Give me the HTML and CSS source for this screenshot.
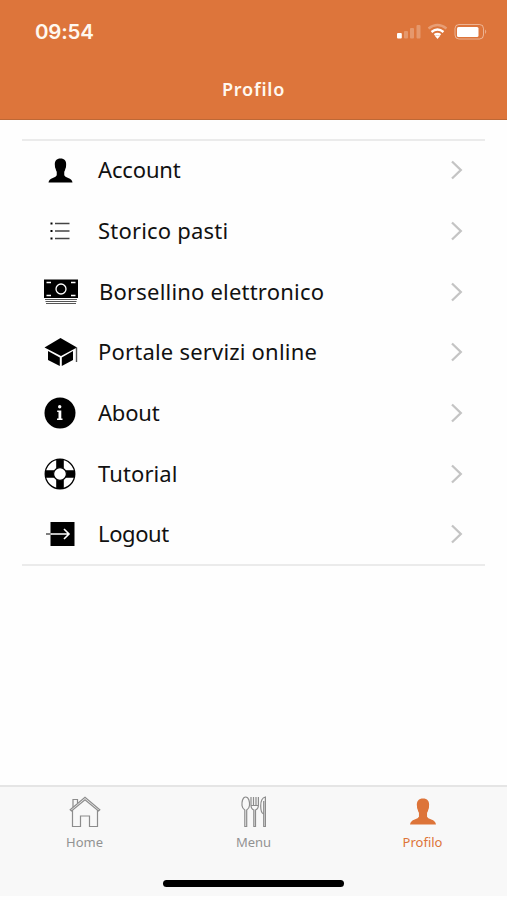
FILE: index.html
```html
<!DOCTYPE html>
<html lang="it">
<head>
<meta charset="utf-8">
<meta name="viewport" content="width=device-width, initial-scale=1">
<title>Profilo</title>
<link rel="stylesheet" href="styles.css">
</head>
<body>
<svg class="symbols" width="0" height="0" aria-hidden="true">
  <symbol id="person" viewBox="0 0 26 26"><path d="M7.200 8C6.500 3 9 .5 13 .5S19.500 3 18.800 8Q19 9.500 18 11.500Q17.500 13.500 16.900 14.300V18Q17.500 19.700 21 20.700Q25 22 25.500 25.500H.5Q1 22 5 20.700Q8.500 19.700 9.100 18V14.300Q8.500 13.500 8 11.500Q7 9.500 7.200 8Z"/></symbol>
  <symbol id="chevron" viewBox="0 0 14 20"><path d="M3 1.500 11.800 10 3 18.500" fill="none" stroke="#c4c4c4" stroke-width="2.300"/></symbol>
</svg>
<main class="screen">
  <header class="header">
    <div class="status">
      <span class="time">09:54</span>
      <svg class="indicators" width="92" height="20" viewBox="0 0 92 20">
        <g fill="#fff"><rect x="0" y="11" width="4.800" height="5.500" rx="1"/><g opacity=".25"><rect x="7" y="9" width="4" height="7.500" rx="1"/><rect x="13" y="6" width="4" height="10.500" rx="1"/><rect x="19.500" y="3" width="4" height="13.500" rx="1"/></g></g>
        <g fill="none" stroke="#fff" stroke-width="2.300"><path d="M31.500 6.500Q40.500 -.5 49.500 6.500" opacity=".3"/><path d="M34.500 10Q40.500 5 46.500 10"/><path d="M37.500 13Q40.500 10.800 43.500 13"/></g>
        <path d="M38 14Q40.500 12.500 43 14L40.500 17Z" fill="#fff"/>
        <rect x="58" y="2.500" width="28.500" height="14.500" rx="4" fill="none" stroke="#fff" opacity=".45"/>
        <rect x="60" y="5" width="21.500" height="10" rx="1.500" fill="#fff"/>
        <path d="M88 7.500Q90.500 9.700 88 12Z" fill="#fff" opacity=".4"/>
      </svg>
    </div>
    <h1 class="title">Profilo</h1>
  </header>
  <nav class="list">
    <a class="row"><svg class="icon person" width="25" height="25"><use href="#person"/></svg><span class="label account">Account</span><svg class="chevron"><use href="#chevron"/></svg></a>
    <a class="row">
      <svg class="icon" width="20" height="18" viewBox="0 0 20 18"><g stroke="#444" stroke-width="1.300"><path d="M5 1.500H19.500M5 9H19.500M5 16.500H19.500"/><path d="M.5 1.500H2.500M.5 9H2.500M.5 16.500H2.500" stroke="#000" stroke-width="2"/></g></svg>
      <span class="label storico">Storico pasti</span><svg class="chevron"><use href="#chevron"/></svg></a>
    <a class="row">
      <svg class="icon wide" width="34" height="26" viewBox="0 0 34 26"><path d="M0 .5H34V19H0Z"/><g fill="none" stroke="#fff" stroke-width="1.300"><circle cx="17" cy="10" r="5"/><path d="M2.500 3.500H7M27 3.500H31.500M2.500 16.500H7M27 16.500H31.500"/></g><path d="M1 20.500H33M1.500 22.500H32.500M2 24.500H32" stroke="#555" stroke-width="1.100"/></svg>
      <span class="label borsellino">Borsellino elettronico</span><svg class="chevron"><use href="#chevron"/></svg></a>
    <a class="row">
      <svg class="icon wide" width="34" height="28" viewBox="0 0 34 28"><path d="M16.500 0 33 9.500 17 18 .5 9.500ZM4 13 15.800 19.500V28L4 22ZM29 13 17.800 19.500V28L29 22Z"/><path d="M32.500 9.500V24" fill="none" stroke="#555" stroke-width="1.400"/></svg>
      <span class="label portale">Portale servizi online</span><svg class="chevron"><use href="#chevron"/></svg></a>
    <a class="row">
      <svg class="icon" width="32" height="32" viewBox="0 0 32 32"><circle cx="16" cy="16" r="15.500"/><g fill="#fff"><circle cx="15.700" cy="9.700" r="1.700"/><path d="M13.200 13.500H17.300V21.500H18.500V23H13V21.500H14.500V15H13.200Z"/></g></svg>
      <span class="label about">About</span><svg class="chevron"><use href="#chevron"/></svg></a>
    <a class="row">
      <svg class="icon" width="32" height="32" viewBox="0 0 32 32"><circle cx="16" cy="16" r="14.800" fill="#fff" stroke="#000" stroke-width="1.300"/><path d="M12.200 1.500Q16 .5 19.800 1.500V30.500Q16 31.500 12.200 30.500ZM1.500 12.200H30.500Q31.500 16 30.500 19.800H1.500Q.5 16 1.500 12.200Z"/><circle cx="16" cy="16" r="6.400" fill="#fff" stroke="#000" stroke-width="1.200"/></svg>
      <span class="label tutorial">Tutorial</span><svg class="chevron"><use href="#chevron"/></svg></a>
    <a class="row">
      <svg class="icon" width="30" height="26" viewBox="0 0 30 26"><path d="M5.500 1H29.500V25H5.500Z"/><path d="M1 13H7" stroke="#555" stroke-width="1.500"/><path d="M5.500 13H24M19 8 24 13 19 18" fill="none" stroke="#fff" stroke-width="1.600"/></svg>
      <span class="label logout">Logout</span><svg class="chevron"><use href="#chevron"/></svg></a>
  </nav>
  <footer class="footer">
    <nav class="tabs">
      <a class="tab"><svg width="32" height="32" viewBox="0 0 32 32"><g fill="none" stroke="#8c8c8c" stroke-width="1.200"><path d="M1.200 13.700 16 1.300 30.800 13.700 29.500 15 16 3.800 2.500 15Z"/><path d="M3.500 14V30.500H11.500V20H20.500V30.500H28.500V14M4 11V3.500H8.500V7"/></g></svg><span class="home">Home</span></a>
      <a class="tab"><svg width="32" height="32" viewBox="0 0 32 32"><g fill="none" stroke="#8c8c8c" stroke-width="1.200"><path d="M7.700 1C4.500 1 3.700 6 4 9.500Q4.300 12.500 6.800 14V30.500H8.700V14Q11.200 12.500 11.500 9.500C11.800 6 10.900 1 7.700 1Z"/><path d="M13 1V9Q13 13 15.800 14V30.500H17.500V14Q20.400 13 20.400 9V1M15.500 1V10M18 1V10M13 9.500H20.400"/><path d="M27.400 30.500V1Q22.700 2 22.700 10Q22.700 17 25.700 18V30.500ZM25.700 5V18"/></g></svg><span class="menu">Menu</span></a>
      <a class="tab active"><svg width="32" height="32" viewBox="0 0 32 32"><use href="#person" x="2.500" y="2" width="27" height="27" fill="#dd7439"/></svg><span class="profile">Profilo</span></a>
    </nav>
    <div class="home-indicator"></div>
  </footer>
</main>
</body>
</html>
```
FILE: styles.css
```css
* { box-sizing: border-box; }
body { margin: 0; background: #fff; color: #111; font-family: "Noto Sans", sans-serif; }
.symbols { display: none; }
.screen { display: flex; flex-direction: column; width: 507px; height: 900px; overflow: hidden; background: #fefefe; }
.header { height: 120px; flex: none; background: #dd753b; border-bottom: 1px solid #bd6836; color: #fff8ef; }
.status { height: 64px; padding: 0 18px 0 35px; display: flex; align-items: center; justify-content: space-between; }
.time { font: 600 20.500px/24px Inter, sans-serif; letter-spacing: -.2px; }
.indicators { display: block; }
.title { margin: 12px 0 0; text-align: center; font-size: 18px; line-height: 26px; font-weight: 600; letter-spacing: .8px; }
.list { height: 427px; margin: 19px 22px 219px; border-top: 2px solid #ebebeb; border-bottom: 2px solid #ebebeb; display: grid; grid-template-columns: 1fr; grid-template-rows: repeat(7, 60.670px); flex: none; }
.row { display: grid; grid-template-columns: 76px 1fr 14px; padding: 0 22px 2px 0; align-items: center; }
.icon { justify-self: center; }
.wide { margin-left: 2px; }
.label { font-size: 22px; line-height: 30px; padding-bottom: 2px; white-space: nowrap; }
.account { letter-spacing: -.15px; }
.storico { letter-spacing: .2px; }
.borsellino { letter-spacing: .2px; padding-left: 1px; }
.portale { letter-spacing: .2px; }
.about { letter-spacing: -.2px; }
.tutorial { letter-spacing: .1px; }
.logout { letter-spacing: -.4px; }
.chevron { width: 14px; height: 20px; }
.footer { flex: none; height: 111px; background: #f8f8f8; border-top: 2px solid #e5e5e5; display: flex; flex-direction: column; }
.tabs { display: grid; grid-template-columns: repeat(3, 1fr); padding-top: 9px; height: 93px; }
.tab { display: flex; flex-direction: column; align-items: center; color: #929292; font-size: 13px; line-height: 18px; gap: 5px; letter-spacing: 0; }
.active { color: #dd7439; }
.home-indicator { width: 181px; height: 7px; margin: 0 auto; border-radius: 4px; background: #000; }
```
